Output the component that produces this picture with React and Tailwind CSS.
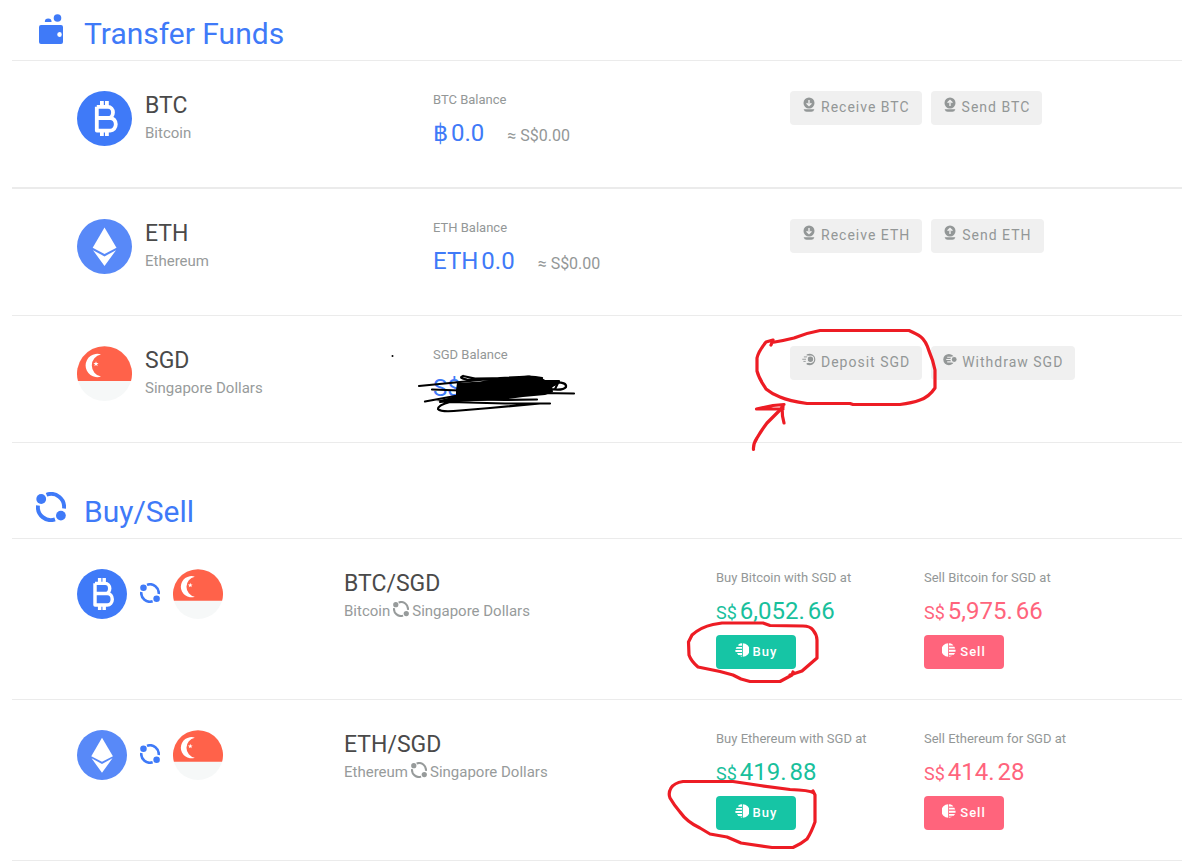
import React from "react";

const BLUE = "#3f7af8";

function WalletIcon() {
  return (
    <svg width="32" height="32" viewBox="0 0 32 32" fill={BLUE} aria-hidden="true">
      <circle cx="21.5" cy="4" r="3.8" />
      <path d="M8.8 8a3.4 3.4 0 0 1 6.8 0z" />
      <path
        fillRule="evenodd"
        d="M5 11h20a2 2 0 0 1 2 2v15a2 2 0 0 1-2 2H5a2 2 0 0 1-2-2V13a2 2 0 0 1 2-2zm18.5 7a2.2 2.4 0 1 0 .01 5 2.2 2.4 0 0 0-.01-5z"
      />
    </svg>
  );
}

function SwapIcon({ className }) {
  return (
    <svg viewBox="0 0 30 30" className={className} aria-hidden="true">
      <g fill="none" stroke="currentColor" strokeWidth="3.9">
        <path d="M10.5 2.8A13 13 0 0 1 28 16.500" />
        <path d="M2 13.500A13 13 0 0 0 19 27.400" />
      </g>
      <circle cx="5.2" cy="7" r="4.9" fill="currentColor" />
      <circle cx="24.9" cy="23.6" r="4.9" fill="currentColor" />
    </svg>
  );
}

function BitcoinCoin() {
  return (
    <svg viewBox="0 0 55 55" className="block h-full w-full" aria-hidden="true">
      <circle cx="27.5" cy="27.5" r="27.5" fill={BLUE} />
      <g fill="none" stroke="#fff" strokeWidth="3.8" strokeLinejoin="round">
        <path d="M19.8 15.8H31a5 5.6 0 0 1 0 11.2H20M31.5 27h1.800a5.500 6.300 0 0 1 0 12.600H19.8V15.8" />
      </g>
      <path d="M23 10h3.800v5H23zM28 10h3.800v5H28zM23 40h3.800v5H23zM28 40h3.800v5H28z" fill="#fff" />
    </svg>
  );
}

function EthereumCoin() {
  return (
    <svg viewBox="0 0 55 55" className="block h-full w-full" aria-hidden="true">
      <circle cx="27.5" cy="27.5" r="27.5" fill="#5889f8" />
      <path d="M27.5 8.5L39.5 28.8 27.5 35 15.7 28.8z" fill="#fff" />
      <path d="M16 31.2L27.5 37.4 39 31.2 27.5 47z" fill="#fff" />
    </svg>
  );
}

function SingaporeCoin() {
  return (
    <svg viewBox="0 0 55 55" className="block h-full w-full" aria-hidden="true">
      <circle cx="27.5" cy="27.5" r="27.5" fill="#f6f8f8" />
      <path d="M1 35A27.5 27.5 0 1 1 54 35z" fill="#ff624a" />
      <path d="M24 8.4A11.7 11.7 0 1 0 24 30.6 11.3 11.3 0 0 1 24 8.4z" fill="#fff" />
      <path d="M19 15.2l.7 1.8 1.9.1-1.5 1.2.5 1.9-1.6-1.1-1.6 1.1.5-1.9-1.5-1.2 1.9-.1z" fill="#fff" />
    </svg>
  );
}

function ReceiveIcon({ up }) {
  return (
    <svg width="12" height="16" viewBox="0 0 12 16" aria-hidden="true">
      <circle cx="6" cy="6" r="5.5" fill="currentColor" />
      <path
        d={up ? "M6 9V3.6M3.6 5.8L6 3.4l2.4 2.4" : "M6 3v5.4M3.6 6.2L6 8.6l2.4-2.4"}
        fill="none"
        stroke="#f0f0f0"
        strokeWidth="1.4"
      />
      <path d="M.6 12.200h10.800q-.8 2.600-3 2.600H3.600Q1.400 14.800.6 12.200z" fill="currentColor" />
    </svg>
  );
}

function DepositIcon() {
  return (
    <svg width="15" height="16" viewBox="0 0 15 16" aria-hidden="true">
      <path d="M2 4.700h3.500M.3 7.200h4M1.500 9.500h2.500" stroke="currentColor" strokeWidth="1" />
      <path d="M5 2A6.200 6.200 0 1 1 5 12.800V11.300H7.200V10H6V4.500H7.200V3.300H5z" fill="currentColor" />
      <circle cx="9" cy="7.300" r="3.500" fill="none" stroke="#f0f0f0" strokeWidth="1.100" />
    </svg>
  );
}

function WithdrawIcon() {
  return (
    <svg width="15" height="16" viewBox="0 0 15 16" aria-hidden="true">
      <circle cx="6.300" cy="7.500" r="6" fill="currentColor" />
      <path d="M4.500 5h7M3.500 7.500h5M4.500 10h7" stroke="#f0f0f0" strokeWidth="1.100" />
      <circle cx="11.500" cy="7.500" r="3.500" fill="#f0f0f0" />
      <circle cx="12" cy="7.500" r="2.600" fill="currentColor" />
    </svg>
  );
}

function TradeIcon({ sell }) {
  return (
    <svg width="14" height="14" viewBox="0 0 14 14" aria-hidden="true">
      {sell ? (
        <path
          d="M6.200.2A6.800 6.800 0 0 0 6.200 13.800zM7 .3Q9 .4 10.600 1.500L11.300 2.500H7zM7 3.700h5.300l.9 1.900H7zM7 6.800h6.600l-.1 1.900H7zM7 9.900h6l-1.200 1.900H7zM7 12.700h3.500L7 13.800z"
          fill="currentColor"
        />
      ) : (
        <path
          d="M7.800.2a6.800 6.800 0 0 1 0 13.600zM7 .3Q5 .4 3.400 1.500V2.700H7zM7 3.900H1.600L.7 5.800H7zM7 7H.3l.2 1.900H7zM7 10.100H2l1.200 1.900H7zM7 12.800H4.500L7 13.800z"
          fill="currentColor"
        />
      )}
    </svg>
  );
}

function RedInk({ className, viewBox, paths }) {
  return (
    <svg viewBox={viewBox} className={`pointer-events-none absolute z-10 max-w-none ${className}`} aria-hidden="true">
      <g fill="none" stroke="#ed1c24" strokeWidth="3.200" strokeLinecap="round" strokeLinejoin="round">
        {paths.map((d) => (
          <path key={d} d={d} />
        ))}
      </g>
    </svg>
  );
}

function DepositInk() {
  return (
    <RedInk
      className="-top-[26px] -left-[50px] h-[140px] w-[210px]"
      viewBox="740 320 210 140"
      paths={[
        "M771 345L773 340 766 342C762 347 758 353 757 358V371C759 379 763 384 766 389Q772 394 780 397 789 401 807 403.500H850L853 404.500H900Q912 403 920 400 929 397 935 388V370Q933 360 929 351 926 341 921 337 917 334 909 330.500H820Q806 333 794 338 782 341 772 342.500",
        "M753.500 449.500Q753 444 757 438 761 431 767 423L783 407",
        "M783 409H756.500L773 405.500 784 404.500M782 406L782.500 416 784 423",
      ]}
    />
  );
}

function BuyInkOne() {
  return (
    <RedInk
      className="-top-[15px] -left-[36px] h-[70px] w-[150px]"
      viewBox="680 620 150 70"
      paths={[
        "M793 672L792 675 780 681.500H750L741 679 733 675 720 671.500 698 667Q691 661 689 655L688.500 642 692 635Q701 627 713 624.500L722 623H763L770 625.500 803 626Q810 626 813 630 817 635 817 640V658L802 671 790 675",
      ]}
    />
  );
}

function BuyInkTwo() {
  return (
    <RedInk
      className="-top-[21px] -left-[56px] h-[80px] w-[160px]"
      viewBox="660 775 160 80"
      paths={[
        "M814 793Q809 790 790 789.500L760 785.500 733 781.500H683Q674 783 671 788 668 793 670 798 674 805 680 812 687 822 700 828L710 834 727 837 741 843 772 847.500H793Q801 844 807 839 811 833 815 822V795L813 791",
      ]}
    />
  );
}

function BlackInk() {
  return (
    <svg
      viewBox="380 340 200 80"
      className="pointer-events-none absolute -top-[6px] -left-[53px] z-10 h-[80px] w-[200px] max-w-none"
      aria-hidden="true"
    >
      <circle cx="392.500" cy="356" r="1" fill="#000" />
      <g fill="none" stroke="#000" strokeWidth="2.200" strokeLinecap="round" strokeLinejoin="round">
        <path d="M419 386L455 382.500 500 378 530 376.500M432 389.500L460 390.500 500 387M463 376Q458 378 467 379.500L500 380M463 376L475 378.500 510 378Q530 375 542 378" />
        <path d="M425 401.500L455 396 500 395 540 393 574 393.500M440 402Q470 399 505 400L537 399.500M550 403.500H505L450 402Q438 405 438 409 441 412.500 460 410.500L490 408 540 403.500" />
        <path d="M555 382.500Q567 382 566 387 563 391 550 389 553 384 559 382M540 381L559 381 555 389 546 391 537 384" />
      </g>
      <path d="M457 383L480 381.500 495 379 513 377 540 377 546 380.500 559 381 557 385 552 387 553 392 545 395 523 397 505 399.500 452 402 436 401 456 396V390z" fill="#000" />
    </svg>
  );
}

function SectionHeader({ icon, children }) {
  return (
    <header className="flex h-[61px] items-start border-b border-[#ebebeb] pl-6">
      <div className="mt-[14px] flex w-[48px] shrink-0">{icon}</div>
      <h2 className="mt-[14px] text-[30px] leading-10 text-[#3f7af8]">{children}</h2>
    </header>
  );
}

function GreyButton({ icon, children }) {
  return (
    <button
      type="button"
      className="flex h-[34px] items-start gap-[5px] rounded bg-[#f0f0f0] px-3 pt-[6px] text-[14px] leading-5 tracking-[1px] whitespace-nowrap text-[#939797]"
    >
      <span className="flex w-[14px] justify-center">{icon}</span>
      {children}
    </button>
  );
}

const funds = [
  {
    code: "BTC",
    name: "Bitcoin",
    coin: <BitcoinCoin />,
    unit: "฿",
    amount: "0.0",
    approx: "S$0.00",
    actions: [
      { label: "Receive BTC", icon: <ReceiveIcon /> },
      { label: "Send BTC", icon: <ReceiveIcon up /> },
    ],
  },
  {
    code: "ETH",
    name: "Ethereum",
    coin: <EthereumCoin />,
    unit: "ETH",
    amount: "0.0",
    approx: "S$0.00",
    actions: [
      { label: "Receive ETH", icon: <ReceiveIcon /> },
      { label: "Send ETH", icon: <ReceiveIcon up /> },
    ],
  },
  {
    code: "SGD",
    name: "Singapore Dollars",
    coin: <SingaporeCoin />,
    unit: "S$",
    note: <BlackInk />,
    actions: [
      { label: "Deposit SGD", icon: <DepositIcon />, note: <DepositInk /> },
      { label: "Withdraw SGD", icon: <WithdrawIcon /> },
    ],
  },
];

const pairs = [
  {
    code: "BTC",
    name: "Bitcoin",
    coin: <BitcoinCoin />,
    buy: ["6,052.", "66"],
    sell: ["5,975.", "66"],
    note: <BuyInkOne />,
  },
  {
    code: "ETH",
    name: "Ethereum",
    coin: <EthereumCoin />,
    buy: ["419.", "88"],
    sell: ["414.", "28"],
    note: <BuyInkTwo />,
  },
];

function FundRow({ fund, first }) {
  return (
    <li
      className={`grid grid-cols-[356fr_357fr_392fr] border-[#ebebeb] pt-[30px] pb-[38px] pl-[65px] ${first ? "border-b-2" : "border-b"}`}
    >
      <div className="flex gap-[13px]">
        <div className="h-[55px] w-[55px] shrink-0">{fund.coin}</div>
        <div>
          <h3 className="text-[23px] leading-[30px] text-[#4a4a4a]">{fund.code}</h3>
          <p className="text-[15px] leading-6 text-[#979b9b]">{fund.name}</p>
        </div>
      </div>
      <div className="relative">
        <p className="text-[13px] leading-[18px] text-[#939797]">{fund.code} Balance</p>
        <p className="mt-2 flex h-8 items-baseline gap-[3px] text-[24px] leading-8 text-[#3f7af8]">
          <span>{fund.unit}</span>
          {fund.amount && <span>{fund.amount}</span>}
          {fund.approx && <span className="ml-5 text-[16px] text-[#939797]">≈ {fund.approx}</span>}
        </p>
        {fund.note}
      </div>
      <div className="flex items-start gap-[9px]">
        {fund.actions.map((a) => (
          <div key={a.label} className="relative">
            <GreyButton icon={a.icon}>{a.label}</GreyButton>
            {a.note}
          </div>
        ))}
      </div>
    </li>
  );
}

function Quote({ label, price, sell, note }) {
  return (
    <div>
      <p className="text-[13px] leading-[18px] text-[#939797]">{label}</p>
      <p
        className={`mt-2 flex h-8 items-baseline gap-[3px] text-[24px] leading-8 ${sell ? "text-[#ff647c]" : "text-[#18c09c]"}`}
      >
        <span className="text-[18px]">S$</span>
        <span>{price[0]}</span>
        <span>{price[1]}</span>
      </p>
      <div className="relative mt-2">
        <button
          type="button"
          className={`flex h-[34px] w-20 items-start justify-center gap-1 rounded pt-[6px] text-[13px] leading-[21px] font-medium tracking-[1px] text-white ${sell ? "bg-[#ff647c]" : "bg-[#16c5a5]"}`}
        >
          <span className="pt-[2px]">
            <TradeIcon sell={sell} />
          </span>
          {sell ? "Sell" : "Buy"}
        </button>
        {note}
      </div>
    </div>
  );
}

function PairRow({ pair }) {
  return (
    <li className="grid grid-cols-[267fr_372fr_208fr_258fr] border-b border-[#ebebeb] py-[30px] pl-[65px]">
      <div className="flex items-start">
        <div className="h-[50px] w-[50px] shrink-0">{pair.coin}</div>
        <div className="mx-3 flex h-12 w-[22px] items-center justify-center">
          <SwapIcon className="h-5 w-5 text-[#3f7af8]" />
        </div>
        <div className="h-[50px] w-[50px] shrink-0">
          <SingaporeCoin />
        </div>
      </div>
      <div>
        <h3 className="text-[23px] leading-[30px] text-[#4a4a4a]">{pair.code}/SGD</h3>
        <p className="flex gap-[3px] text-[15px] leading-6 text-[#979b9b]">
          {pair.name}
          <SwapIcon className="mt-[2px] h-4 w-4" />
          Singapore Dollars
        </p>
      </div>
      <Quote label={`Buy ${pair.name} with SGD at`} price={pair.buy} note={pair.note} />
      <Quote label={`Sell ${pair.name} for SGD at`} price={pair.sell} sell />
    </li>
  );
}

export default function App() {
  return (
    <main className="min-h-screen overflow-x-hidden bg-white pl-3 font-[Roboto,sans-serif]">
      <section>
        <SectionHeader icon={<WalletIcon />}>Transfer Funds</SectionHeader>
        <ul>
          {funds.map((f, i) => (
            <FundRow key={f.code} fund={f} first={i === 0} />
          ))}
        </ul>
      </section>
      <section className="mt-[35px]">
        <SectionHeader icon={<SwapIcon className="h-[30px] w-[30px] text-[#3f7af8]" />}>Buy/Sell</SectionHeader>
        <ul>
          {pairs.map((p) => (
            <PairRow key={p.code} pair={p} />
          ))}
        </ul>
      </section>
    </main>
  );
}
